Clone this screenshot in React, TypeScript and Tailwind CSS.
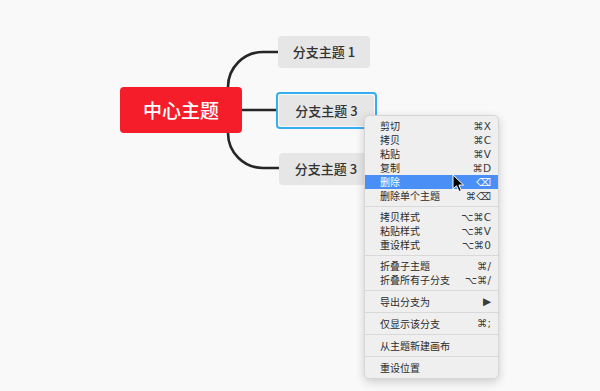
import React from "react";

type Item = { label: string; sc?: string; active?: boolean };

const groups: Item[][] = [
  [
    { label: "剪切", sc: "⌘X" },
    { label: "拷贝", sc: "⌘C" },
    { label: "粘贴", sc: "⌘V" },
    { label: "复制", sc: "⌘D" },
    { label: "删除", sc: "⌫", active: true },
    { label: "删除单个主题", sc: "⌘⌫" },
  ],
  [
    { label: "拷贝样式", sc: "⌥⌘C" },
    { label: "粘贴样式", sc: "⌥⌘V" },
    { label: "重设样式", sc: "⌥⌘0" },
  ],
  [
    { label: "折叠子主题", sc: "⌘/" },
    { label: "折叠所有子分支", sc: "⌥⌘/" },
  ],
  [{ label: "导出分支为", sc: "▶" }],
  [{ label: "仅显示该分支", sc: "⌘;" }],
  [{ label: "从主题新建画布" }],
  [{ label: "重设位置" }],
];

const font = { fontFamily: '"Noto Sans CJK SC", "Noto Sans", sans-serif' };
const scFont = { fontFamily: '"DejaVu Sans", "Noto Sans", sans-serif' };

function Row({ item, single }: { item: Item; single: boolean }) {
  return (
    <div
      className={`flex items-center justify-between pl-[15px] pr-[7px] text-[10px] ${
        single ? "h-[16px]" : "h-[14px]"
      } ${item.active ? "bg-[#4a8ff6] text-white" : "text-[#2a2a2a]"}`}
    >
      <span className="leading-none">{item.label}</span>
      {item.sc && (
        <span
          className={`text-[10.5px] leading-none ${item.active ? "text-white" : "text-[#3a3a3a]"}`}
          style={scFont}
        >
          {item.sc}
        </span>
      )}
    </div>
  );
}

export default function App() {
  return (
    <div className="relative w-[600px] h-[391px] bg-[#f9f9fa] overflow-hidden" style={font}>
      <svg className="absolute left-0 top-0" width="600" height="391">
        <path d="M228 100 L228 87 A35 35 0 0 1 263 52 L280 52" fill="none" stroke="#262626" strokeWidth="2.6" />
        <path d="M228 120 L228 133 A35 35 0 0 0 263 168 L281 168" fill="none" stroke="#262626" strokeWidth="2.6" />
        <path d="M240 110 L278 110" fill="none" stroke="#262626" strokeWidth="2.6" />
      </svg>

      <div className="absolute left-[120px] top-[87px] w-[122px] h-[46px] rounded-[4px] bg-[#f61d2b] flex items-center justify-center text-white text-[19px] font-medium">
        中心主题
      </div>

      <div className="absolute left-[278px] top-[36px] w-[92px] h-[32px] rounded-[4px] bg-[#e6e6e6] flex items-center justify-center text-[#333] text-[13px] font-medium">
        分支主题 1
      </div>

      <div className="absolute left-[276px] top-[92px] w-[101px] h-[37px] rounded-[4px] border-2 border-[#35aef0] p-[1px]">
        <div className="w-full h-full rounded-[3px] bg-[#e6e6e6] flex items-center justify-center text-[#333] text-[13px] font-medium">
          分支主题 3
        </div>
      </div>

      <div className="absolute left-[279px] top-[153px] w-[94px] h-[32px] rounded-[4px] bg-[#e6e6e6] flex items-center justify-center text-[#333] text-[13px] font-medium">
        分支主题 3
      </div>

      <div className="absolute left-[364px] top-[115px] w-[135px] rounded-[5px] bg-[#efefef] border border-[#d6d6d6] shadow-[0_3px_10px_rgba(0,0,0,0.18)] overflow-hidden">
        {groups.map((g, gi) => (
          <div
            key={gi}
            className={`${g.length === 1 ? "py-[2.5px]" : "py-[3px]"} ${gi > 0 ? "border-t border-[#d9d9d9]" : ""}`}
          >
            {g.map((it, i) => (
              <Row key={i} item={it} single={g.length === 1} />
            ))}
          </div>
        ))}
      </div>

      <svg className="absolute left-[452px] top-[174px]" width="14" height="20" viewBox="0 0 14 20">
        <path
          d="M1 1 L1 15 L4.5 11.8 L7 17.5 L9.3 16.5 L6.9 11 L11.5 11 Z"
          fill="#000"
          stroke="#fff"
          strokeWidth="1"
          strokeLinejoin="round"
        />
      </svg>
    </div>
  );
}
